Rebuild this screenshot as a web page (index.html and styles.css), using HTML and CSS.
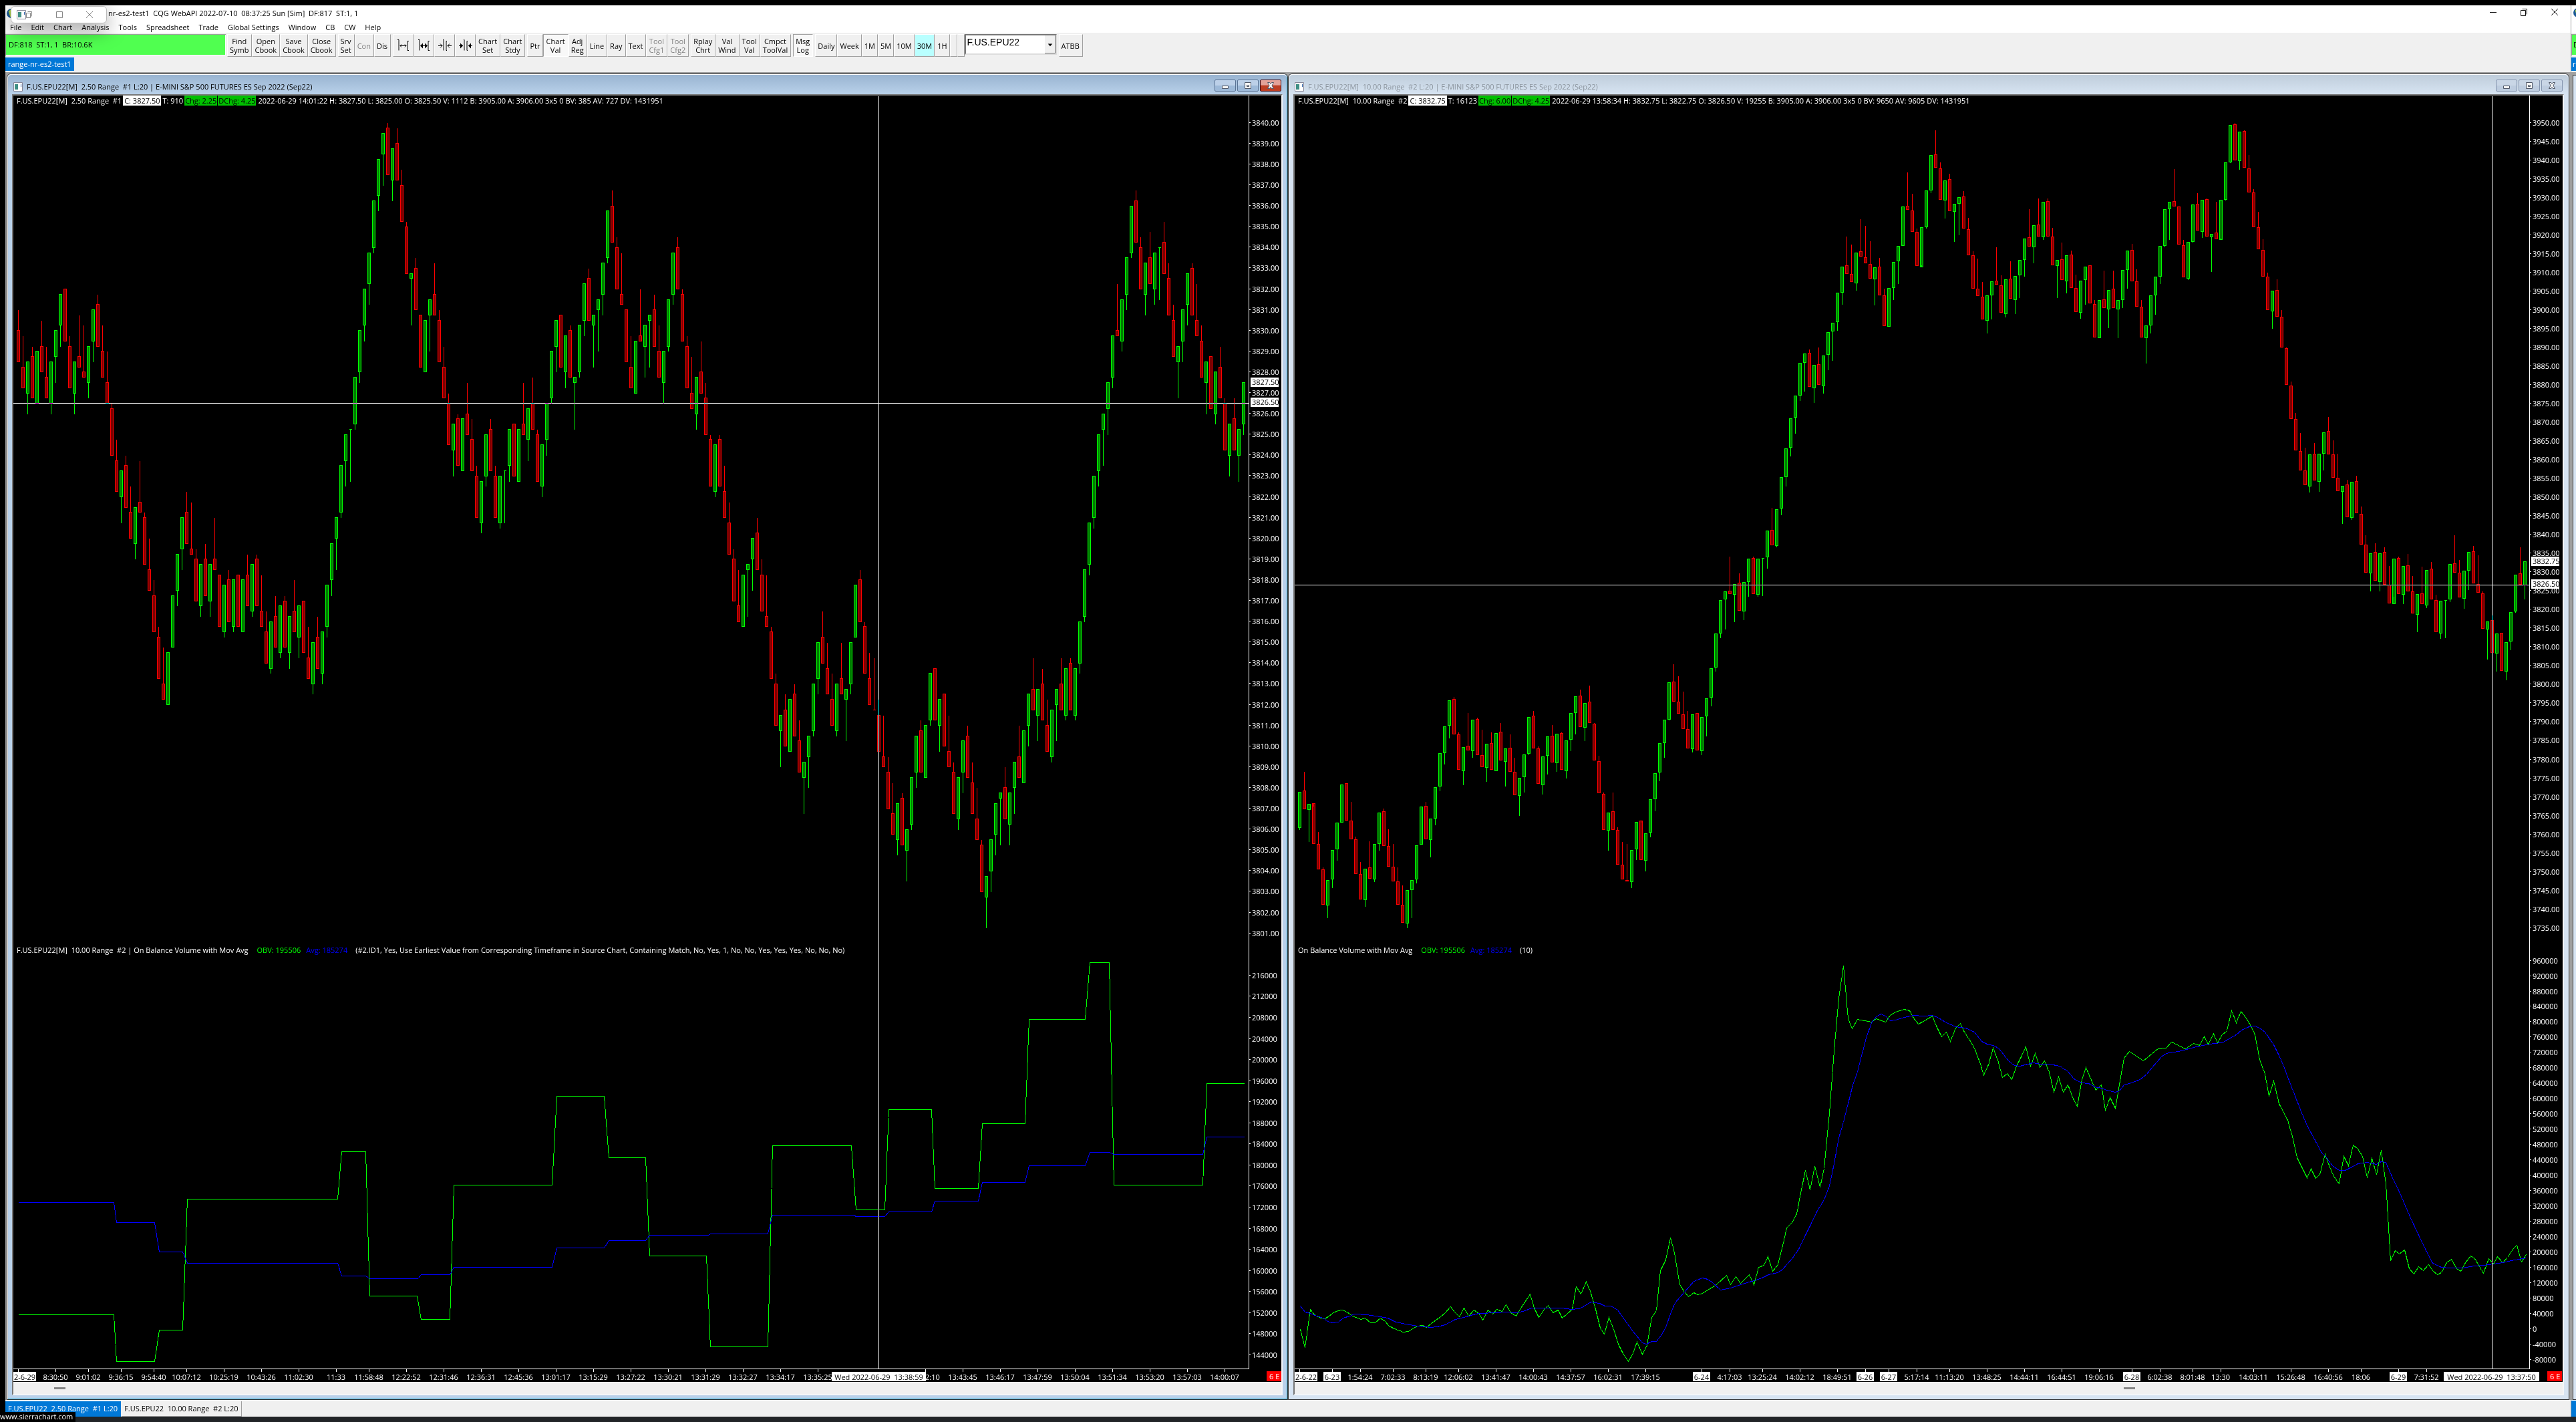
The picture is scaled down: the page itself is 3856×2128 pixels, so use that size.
FILE: index.html
```html
<!DOCTYPE html>
<html lang="en">
<head>
<meta charset="utf-8">
<title>range-nr-es2-test1</title>
<link rel="stylesheet" href="styles.css">
</head>
<body>
<div class="desktop">
  <div class="app">
    <header class="titlebar">
      <svg class="globe" viewBox="0 0 16 16" aria-hidden="true"><circle cx="8" cy="8" r="8" fill="#1c5a96"/><path d="M3 4 8 1l5 4-2 7-5 2z" fill="#a9cf48"/></svg>
      <h1 class="caption">nr-es2-test1  CQG WebAPI 2022-07-10  08:37:25 Sun [Sim]  DF:817  ST:1, 1</h1>
      <div class="sys">
        <button aria-label="Minimize"><svg viewBox="0 0 12 12"><path d="M1 6.500h10"/></svg></button>
        <button aria-label="Restore"><svg viewBox="0 0 12 12"><path d="M1.500 3.500h7v8h-7zM3.500 1.500h7v8"/></svg></button>
        <button aria-label="Close"><svg viewBox="0 0 12 12"><path d="M1 1l10 10M11 1 1 11"/></svg></button>
      </div>
    </header>
    <nav class="menu">
      <a href="#">File</a><a href="#">Edit</a><a href="#">Chart</a><a href="#">Analysis</a><a href="#">Tools</a><a href="#">Spreadsheet</a><a href="#">Trade</a><a href="#">Global Settings</a><a href="#">Window</a><a href="#">CB</a><a href="#">CW</a><a href="#">Help</a>
    </nav>
    <div class="toolbar">
      <div class="status">DF:818  ST:1, 1  BR:10.6K</div>
      <div class="group"><button>Find<br>Symb</button><button>Open<br>Cbook</button><button>Save<br>Cbook</button><button>Close<br>Cbook</button></div>
      <div class="group"><button>Srv<br>Set</button><button disabled>Con</button><button>Dis</button></div>
      <div class="group">
        <button class="icon" aria-label="Increase bar spacing"><svg viewBox="0 0 20 20"><path d="M1 1.500h2v16M18 3.500h-2v14h2M5 10.500h9M7 8.500l-2 2 2 2M12 8.500l2 2-2 2"/></svg></button>
        <button class="icon" aria-label="Increase bar spacing more"><svg viewBox="0 0 20 20"><path d="M1 1.500h2v16M18 3.500h-2v14h2M5 10.500h9"/><path class="solid" d="M4 10.500l4-4v8zM15 10.500l-4-4v8z"/></svg></button>
        <button class="icon" aria-label="Decrease bar spacing"><svg viewBox="0 0 20 20"><path d="M7 1.500h1v16M13 3.500h-1v14h1M0 10.500h6M3 7.500l3 3-3 3M20 10.500h-6M17 7.500l-3 3 3 3"/></svg></button>
        <button class="icon" aria-label="Decrease bar spacing more"><svg viewBox="0 0 20 20"><path d="M7 1.500h1v16M13 3.500h-1v14h1M0 10.500h6M20 10.500h-6"/><path class="solid" d="M6 10.500l-4-4v8zM14 10.500l4-4v8z"/></svg></button>
        <button>Chart<br>Set</button><button>Chart<br>Stdy</button>
      </div>
      <div class="group"><button>Ptr</button><button class="on">Chart<br>Val</button><button>Adj<br>Reg</button><button>Line</button><button>Ray</button><button>Text</button><button disabled>Tool<br>Cfg1</button><button disabled>Tool<br>Cfg2</button></div>
      <div class="group"><button>Rplay<br>Chrt</button><button>Val<br>Wind</button><button>Tool<br>Val</button><button>Cmpct<br>ToolVal</button></div>
      <div class="group"><button class="on">Msg<br>Log</button></div>
      <div class="group tight"><button>Daily</button><button>Week</button><button>1M</button><button>5M</button><button>10M</button><button class="period">30M</button><button>1H</button><button class="blank" aria-label="Custom period 1"></button><button class="blank" aria-label="Custom period 2"></button></div>
      <div class="symbol"><select aria-label="Symbol"><option>F.US.EPU22</option></select><svg viewBox="0 0 16 27" aria-hidden="true"><path d="M5 13h7l-3.500 4z"/></svg></div>
      <div class="group"><button>ATBB</button></div>
    </div>
    <div class="books"><button class="book">range-nr-es2-test1</button></div>

    <main class="workspace">
      <section class="win active">
        <header class="winbar">
          <svg class="winicon" viewBox="0 0 14 14" aria-hidden="true"><path d="M.5.5h13v13H.5z" fill="#fff" stroke="#889"/><path d="M2 3h5v8H2z" fill="#3f8f84"/><path d="M11 3h1v4h-1z" fill="#36a"/></svg>
          <h2>F.US.EPU22[M]  2.50 Range  #1 L:20 | E-MINI S&amp;P 500 FUTURES ES Sep 2022 (Sep22)</h2>
          <div class="winbtns">
            <button aria-label="Minimize chart 1"><svg viewBox="0 0 12 12"><path d="M1.500 6.500h9v4h-9z"/></svg></button>
            <button aria-label="Maximize chart 1"><svg viewBox="0 0 12 12"><path d="M1.500 1.500h9v9h-9zM4.500 5.500h3v2h-3z"/></svg></button>
            <button class="close" aria-label="Close chart 1"><svg viewBox="0 0 12 12"><path d="M1.500 1.500h3L6 3.500l1.500-2h3L8 6l2.500 4.500h-3L6 8.500l-1.500 2h-3L4 6z"/></svg></button>
          </div>
        </header>
        <div class="client">
          <div class="plot">
            <svg class="chart" id="chart1" viewBox="20 143 1898 1925" role="img" aria-label="F.US.EPU22 2.50 Range"></svg>
            <p class="readout"><span>F.US.EPU22[M]  2.50 Range  #1</span><span class="last">C: 3827.50</span><span>T: 910</span><span class="chg">Chg: 2.25</span><span class="chg">DChg: 4.25</span><span>2022-06-29 14:01:22 H: 3827.50 L: 3825.00 O: 3825.50 V: 1112 B: 3905.00 A: 3906.00 3x5 0 BV: 385 AV: 727 DV: 1431951</span></p>
            <p class="study"><span>F.US.EPU22[M]  10.00 Range  #2 | On Balance Volume with Mov Avg</span><span class="obv">OBV: 195506</span><span class="avg">Avg: 185274</span><span class="args">(#2.ID1, Yes, Use Earliest Value from Corresponding Timeframe in Source Chart, Containing Match, No, Yes, 1, No, No, Yes, Yes, Yes, No, No, No)</span></p>
          </div>
          <div class="scroll first"><i></i></div>
        </div>
      </section>
      <section class="win">
        <header class="winbar">
          <svg class="winicon" viewBox="0 0 14 14" aria-hidden="true"><path d="M.5.5h13v13H.5z" fill="#fff" stroke="#889"/><path d="M2 3h5v8H2z" fill="#3f8f84"/><path d="M11 3h1v4h-1z" fill="#36a"/></svg>
          <h2>F.US.EPU22[M]  10.00 Range  #2 L:20 | E-MINI S&amp;P 500 FUTURES ES Sep 2022 (Sep22)</h2>
          <div class="winbtns">
            <button aria-label="Minimize chart 2"><svg viewBox="0 0 12 12"><path d="M1.500 6.500h9v4h-9z"/></svg></button>
            <button aria-label="Maximize chart 2"><svg viewBox="0 0 12 12"><path d="M1.500 1.500h9v9h-9zM4.500 5.500h3v2h-3z"/></svg></button>
            <button aria-label="Close chart 2"><svg viewBox="0 0 12 12"><path d="M1.500 1.500h3L6 3.500l1.500-2h3L8 6l2.500 4.500h-3L6 8.500l-1.500 2h-3L4 6z"/></svg></button>
          </div>
        </header>
        <div class="client">
          <div class="plot">
            <svg class="chart" id="chart2" viewBox="1938 143 1898 1925" role="img" aria-label="F.US.EPU22 10.00 Range"></svg>
            <p class="readout"><span>F.US.EPU22[M]  10.00 Range  #2</span><span class="last">C: 3832.75</span><span>T: 16123</span><span class="chg">Chg: 6.00</span><span class="chg">DChg: 4.25</span><span>2022-06-29 13:58:34 H: 3832.75 L: 3822.75 O: 3826.50 V: 19255 B: 3905.00 A: 3906.00 3x5 0 BV: 9650 AV: 9605 DV: 1431951</span></p>
            <p class="study"><span>On Balance Volume with Mov Avg</span><span class="obv">OBV: 195506</span><span class="avg">Avg: 185274</span><span class="args">(10)</span></p>
          </div>
          <div class="scroll second"><i></i></div>
        </div>
      </section>
    </main>
    <nav class="tabs"><button class="tab current">F.US.EPU22  2.50 Range  #1 L:20</button><button class="tab">F.US.EPU22  10.00 Range  #2 L:20</button></nav>
  </div>
  <div class="app neighbour">
    <div class="titlebar"><svg class="globe" viewBox="0 0 16 16" aria-hidden="true"><circle cx="8" cy="8" r="8" fill="#1c5a96"/><path d="M3 4 8 1l5 4-2 7-5 2z" fill="#a9cf48"/></svg></div>
    <div class="menu"></div>
    <div class="toolbar"><div class="status">D</div></div>
    <div class="books"><button class="book">r</button></div>
    <div class="workspace"><div class="edge"></div></div>
    <div class="tabs"></div>
  </div>
</div>
<div class="floater">
  <svg class="winicon" viewBox="0 0 14 14" aria-hidden="true"><path d="M.5.5h13v13H.5z" fill="#fff" stroke="#889"/><path d="M2 3h5v8H2z" fill="#3f8f84"/><path d="M11 3h1v4h-1z" fill="#36a"/></svg>
  <button aria-label="Restore panel"><svg viewBox="0 0 12 12"><path d="M1.500 3.500h6v7h-6zM3.500 1.500h6v7"/></svg></button>
  <button aria-label="Maximize panel"><svg viewBox="0 0 12 12"><path d="M1.500 1.500h9v9h-9z"/></svg></button>
  <button aria-label="Close panel"><svg viewBox="0 0 12 12"><path d="M1 1l10 10M11 1 1 11"/></svg></button>
</div>
<div class="tip">www.sierrachart.com</div>
<script src="charts.js"></script>
</body>
</html>
```
FILE: styles.css
```css
* { box-sizing: border-box; }
body {
  margin: 0;
  min-height: 100vh;
  background: #212427;
  color: #000;
  font: 11px/14px "Open Sans", "Noto Sans", sans-serif;
}
h1, h2, p { margin: 0; font: inherit; }
button, select { font: inherit; color: inherit; border: 0; padding: 0; margin: 0; background: none; border-radius: 0; }
a { color: inherit; text-decoration: none; }
svg { display: block; }

.desktop { display: flex; padding-top: 8px; border-left: 8px solid #000; background: linear-gradient(#000 8px, transparent 8px); }
.app { flex: 1; min-width: 0; background: #f0f0f0; }
.neighbour { flex: 0 0 8px; overflow: hidden; border-left: 1px solid #a0a0a0; }

.titlebar { display: flex; align-items: center; height: 24px; background: #fff; }
.globe { flex: none; width: 14px; height: 14px; margin-left: 2px; }
.neighbour .globe { margin-left: 3px; margin-bottom: 2px; }
.caption { flex: 1; padding-left: 138px; white-space: pre; }
.sys { display: flex; gap: 34px; padding-right: 18px; margin-bottom: 4px; }
.sys svg { width: 12px; height: 12px; }
.sys path, .floater button path { fill: none; stroke: #111; }

.menu { display: flex; gap: 14px; height: 17px; padding: 2px 0 0 7px; background: #fff; white-space: pre; }

.toolbar { display: flex; height: 37px; padding-top: 2px; white-space: pre; }
.status { width: 330px; height: 32px; padding: 8px 4px; margin-right: 2px; background: #50ff50; border: solid #a0a0a0; border-width: 1px 0 0 1px; box-shadow: inset -1px -1px #fff; }
.neighbour .status { padding: 8px 2px; }
.group { display: flex; height: 34px; margin-right: 3px; }
.group button { padding: 0 4px 0 3px; line-height: 13px; text-align: center; border: solid; border-width: 1px; border-color: #fff #a0a0a0 #a0a0a0 #fff; }
.group.tight { margin-right: 0; }
.group.tight button { padding: 0 3px; }
.group button:disabled { color: #808080; }
.group .on { background: #f8f8f8; border-color: #a0a0a0 #fff #fff #a0a0a0; }
.group .period { background: #b9ffff; }
.group .icon { width: 31px; padding: 0 5px; }
.group.tight .blank { width: 11px; padding: 0; }
.icon svg { width: 20px; height: 20px; }
.icon path { fill: none; stroke: #000; }
.icon .solid { fill: #000; stroke: none; }
.symbol { position: relative; width: 138px; height: 31px; margin-right: 3px; border: 2px solid #777; border-right-color: #ddd; border-bottom-color: #ddd; background: #fff; }
.symbol select { appearance: none; width: 100%; height: 20px; padding-left: 2px; font: 14px "Liberation Sans", sans-serif; }
.symbol svg { position: absolute; right: 0; top: 0; width: 16px; height: 27px; background: #f0f0f0; border: solid #777; border-width: 0 1px 1px 0; pointer-events: none; }

.books { display: flex; height: 24px; padding-bottom: 3px; border-bottom: 1px solid #a0a0a0; box-shadow: inset 0 -1px #a0a0a0; }
.book { padding: 0 4px; background: #0078d7; color: #fff; white-space: pre; }
.neighbour .book { padding: 0 2px; }

.workspace { display: grid; grid-template-columns: 1fr 1fr; padding: 0 2px; background: #a0a0a0; }
.win { min-width: 0; padding: 0 7px 6px; border: 1px solid #333; border-radius: 6px 6px 0 0; background: #d7e4f2; color: #8c959e; box-shadow: inset 1px 1px #fff; }
.win.active { background: #b9d1ea; color: #000; box-shadow: inset 1px 1px #fff, inset -1px -1px #27b5e0; }
.winbar { display: flex; align-items: center; height: 30px; margin: 0 -6px; padding: 7px 8px 0 8px; background: linear-gradient(#bfcddb, #d7e4f2); border-radius: 5px 5px 0 0; border-top: 1px solid #fff; }
.active .winbar { background: linear-gradient(#99b4d1, #b9d1ea); }
.winicon { flex: none; width: 14px; height: 14px; }
.winbar h2 { flex: 1; padding-left: 6px; white-space: pre; }
.winbtns { display: flex; gap: 2px; align-self: flex-start; }
.winbtns button { display: grid; place-items: center; width: 32px; height: 18px; border: 1px solid #8494ae; border-radius: 2px; background: linear-gradient(#c9d6e6 50%, #bdccdf 50%); }
.winbtns svg { width: 12px; height: 12px; }
.winbtns path { fill: #f4f4f4; stroke: #505868; }
.active .winbtns button { border-color: #5a7394; background: linear-gradient(#bcd0e8 50%, #9db9d8 50%); }
.active .winbtns .close { border-color: #43101a; background: linear-gradient(#e3a298 45%, #bd3f24 50%); }
.client { border: 2px solid; border-color: #777 #f4f6f8 #f4f6f8 #777; }
.plot { position: relative; background: #000; color: #fff; }
.chart { width: 100%; height: auto; }
.readout { position: absolute; left: 3px; top: 0; display: flex; line-height: 15px; white-space: pre; }
.readout span { padding: 0 2px; }
.readout .last { background: #fff; color: #000; }
.readout .chg { background: #00c000; color: #000; margin-right: 1px; padding: 0 1px; }
.study { position: absolute; left: 5px; top: 66%; display: flex; gap: 8px; line-height: 15px; white-space: pre; }
.obv { padding-left: 5px; color: #0f0; }
.avg { color: #00f; }
.args { padding-left: 4px; }
.scroll { display: flex; align-items: center; height: 18px; background: #f0f0f0; }
.scroll i { width: 17px; height: 3px; background: #858585; }
.first { padding-left: 3.2%; }
.second { padding-left: 65.4%; }

.tabs { display: flex; height: 25px; padding-top: 1px; border-top: 1px solid #fff; gap: 1px; background: #f0f0f0; white-space: pre; }
.tab { padding: 0 4px; border-right: 1px solid #a0a0a0; border-bottom: 1px solid #a0a0a0; }
.tab.current { background: #0078d7; color: #fff; border-color: #0078d7; }
.neighbour .workspace { display: block; height: calc(100% - 127px); padding: 2px 0 0 2px; }
.edge { height: 100%; background: #d7e4f2; border: solid #333; border-width: 1px 0 1px 1px; }
.neighbour .tabs { background: #0078d7; }

.floater { position: absolute; left: 16px; top: 9px; display: flex; align-items: center; width: 144px; height: 26px; padding-left: 8px; background: #fff; border: 1px solid #bbb; border-radius: 6px; box-shadow: 0 10px 30px rgba(0, 0, 0, .4); }
.floater button { width: 12px; margin-right: 33px; }
.floater button:first-of-type { margin-left: -1px; }
.floater button:last-child { margin-right: 0; }
.floater button path { stroke: #888; }
.tip { position: absolute; left: 0; bottom: 0; width: 113px; height: 15px; background: #000; color: #fff; }

text { font: 11px "Open Sans", "Noto Sans", sans-serif; fill: #fff; }
.mid { text-anchor: middle; }
.dark { fill: #000; }
.box { fill: #fff; }
.alert { fill: #f00; }
.axis, .up, .down, .line, .cross { shape-rendering: crispEdges; stroke-width: 1; }
.axis { fill: none; stroke: #fff; }
.up { fill: #008000; stroke: #0f0; }
.down { fill: #800000; stroke: #f00; }
.line { fill: none; }
.line.green { stroke: #0f0; }
.line.blue { stroke: #00f; }
.cross { fill: none; stroke: #fff; mix-blend-mode: difference; }
```
FILE: charts.js
```js
// Range bars: each number is a bar's close, positive for an up bar and negative for a down bar.
// A bar opens one tick beyond the previous close and always spans the full range.
// Each run of closes is in its own plotting scale: y = top + value / scale.
const chart1 = {
  id: "chart1", x0: 27, axisX: 1869, left: 20, tick: 7.775, base: 183.7, span: 10, firstBody: 6,
  runs: [
    { top: 150, scale: 1.6505, closes: [-645,-710,644,-735,620,-671,-735,644,568,478,-594,-710,644,-658,-684,606,517,-606,-684,-748,-876,-967,914,-1005,-1083,1004,-1018,-1146,-1211,-1313,-1429,-1480,1364,1224,1120,1031,-1095,-1120,-1236,1146,-1224,1146,-1159,-1300,1197,-1287,1184,-1300,1184,-1248,1146,-1248,-1300,-1390,1287,-1351,1248,-1351,1274,-1313,1248,-1364,-1429,1339,-1403,1313,1197,1095,1031,902,825,812,684,568,466,376,247,144,80,-183,119,-195,-298,-426,427,-517,-658,542,491,-529,-645,-735,-851,800,-902,786,-825,-915,-1031,940,825,-915,-1031,928,915,812,-928,812,-825,760,-812,-940,851,748,620,542,-658,581,-684,684,555,453,-542,529,491,402,272,-351,-466,-504,-645,-710,594,-594] },
    { top: 150, scale: 1.2544, closes: [422,402,-461,-520,471,374,285,-354,-451,-539,-577,520,-549,-627,-725,646,-725,-783,-851,-939,-978,890,871,822,-881,-959,-988,-1085,-1173,1154,-1212,1124,-1193,-1261,1242,1193,1095,1018,-1056,-1115,-1173,1095,-1115,1105,1018,909,-978,-1075,-1134,-1144,-1222,-1251,-1329,-1378,1320,-1398,1369,1271,1193,-1261,1173,1075,-1163,1124,-1212,-1251,-1339,1271,1202,-1271,-1339,-1388,-1485,1456,1388,1320,1300,-1349,1300,1242,-1271,1183,1115,-1144,1105,-1163,-1222,1144,1105,-1144,1066,-1144,1066,978,881,793,705,627,587,529,442,-442,374,295,197,-266,-354,305,-344,285,275,-325,-402,-481,461,393,324,-402,-442,-520,490,-577,510,-558,-656,607,-656,617,530] }
  ],
  cross: [1315, 603],
  prices: { from: 3840, to: 3801, step: -1, y: 183.7, dy: 31.1, digits: 2 },
  volumes: { from: 216000, to: 144000, step: -4000, y: 1459.9, dy: 31.55, digits: 0 },
  marks: [["3827.50", 572], ["3826.50", 602]],
  times: [["2-6-29",27,1,10],["8:30:50",83],["9:01:02",132],["9:36:15",181],["9:54:40",230],["10:07:12",279],["10:25:19",335],["10:43:26",391],["11:02:30",447],["11:33",503],["11:58:48",552],["12:22:52",608],["12:31:46",664],["12:36:31",720],["12:45:36",776],["13:01:17",832],["13:15:29",888],["13:27:22",944],["13:30:21",1000],["13:31:29",1056],["13:32:27",1112],["13:34:17",1168],["13:35:25",1224],["13:42:10",1385],["13:43:45",1441],["13:46:17",1497],["13:47:59",1553],["13:50:04",1609],["13:51:34",1665],["13:53:20",1721],["13:57:03",1777],["14:00:07",1833]],
  cursor: ["Wed 2022-06-29  13:38:59", 1245, 1386],
  green: "22,1222 137,1222 141,1371 187,1371 192,1270 221,1270 226,848 408,848 413,695 442,695 447,1160 504,1160 509,1237 544,1237 549,804 668,804 673,516 731,516 736,714 781,714 786,1031 854,1031 859,1324 929,1324 934,677 1030,677 1035,884 1070,884 1075,559 1127,559 1131,815 1183,815 1188,606 1240,606 1245,270 1313,270 1318,87 1342,87 1347,804 1455,804 1460,477 1505,477",
  blue: "22,860 137,860 141,924 187,924 192,1018 221,1018 226,1056 408,1056 413,1097 442,1097 447,1104 505,1104 509,1093 544,1093 549,1069 668,1069 673,1005 731,1005 736,983 781,983 786,964 857,964 859,960 929,960 934,901 1032,901 1035,904 1070,904 1075,890 1127,890 1131,856 1183,856 1188,794 1240,794 1245,740 1313,740 1318,697 1342,697 1347,705 1455,705 1460,649 1505,649",
  lineX: 0
};
const chart2 = {
  id: "chart2", x0: 1945, axisX: 3786, left: 1938, tick: 1.4012, base: 183.5, span: 40, firstBody: 38,
  runs: [
    { top: 700, scale: 2.1189, closes: [1028,-1083,1066,-1191,-1273,-1386,1307,1212,1126,1004,-1118,-1178,-1288,-1367,1273,-1303,1195,1093,-1198,-1264,-1309,-1384,-1441,1339,1307,1197,1076,-1176,1115,1013,907,822,738,-843,-956,886,-894,799,-909,-949,877,-958,841,-928,892,-964,-1038,983,911,790,-888,-1002,917,852,-934,843,-958,865,778,725,-822,746,-809,-926,-1032,-1148,1093,-1148,-1257,-1305,-1309,1212,1123,-1242,1159,1051,970,873,799,682,-740,-780,-828,-888,782,-894,790,731,638,526,420,392,-400,370,-451,362,289,-400,290,287,199,-246,131,30] },
    { top: 150, scale: 2.0632, closes: [1076,984,912,811,782,-883,819,-879,788,718,689,594,514,-534,-561,472,-483,-503,-549,518,-602,-697,582,501,450,330,-338,-404,-510,394,281,169,-208,-307,248,-340,320,299,-396,-477,-582] },
    { top: 150, scale: 1.7422, closes: [-509,-570,511,473,-480,-553,468,-517,459,418,360,-381,328,-353,267,-353,-430,417,-468,405,-487,-552,471,435,-529,-618,522,-541,496,-541,522,443,394,-471,-536,-618,588,509,462,380,286,265,-275,-376,-462,370,272,-339,260,-353,348,-360,262,163,65,-157,82,-175,-238,-329,-388,-459,-546,497,-564,-644,-741,-830,-912,-964,-1003,924,-990,922,867,-923,-984,-1018,1006,-1086,996,-1076,-1158,-1231,1182,-1252,1182,-1262,-1311,1196,-1287,1215,-1280,-1337,1288,-1313,1226,-1301,-1386,1307,1304,1210,-1231,-1295,1228,1178,-1259,-1283,-1377,1360,-1440,1391,-1487,1414,1336,1238,-1262,1203] }
  ],
  cross: [3730, 875],
  prices: { from: 3950, to: 3735, step: -5, y: 183.5, dy: 28.03, digits: 2 },
  volumes: { from: 960000, to: -80000, step: -40000, y: 1437.6, dy: 22.965, digits: 0 },
  marks: [["3832.75", 840], ["3826.50", 874]],
  times: [["2-6-22",1945,1,10],["6-23",1994,1],["1:54:24",2036],["7:02:33",2085],["8:13:19",2134],["12:06:02",2183],["13:41:47",2239],["14:00:43",2295],["14:37:57",2351],["16:02:31",2407],["17:39:15",2463],["6-24",2547,1],["4:17:03",2589],["13:25:24",2638],["14:02:12",2694],["18:49:51",2750],["6-26",2792,1],["6-27",2827,1],["5:17:14",2869],["11:13:20",2918],["13:48:25",2974],["14:44:11",3030],["16:44:51",3086],["19:06:16",3142],["6-28",3191,1],["6:02:38",3233],["8:01:48",3282],["13:30",3324],["14:03:11",3373],["15:26:48",3429],["16:40:56",3485],["18:06",3534],["6-29",3590,1],["7:31:52",3632]],
  cursor: ["Wed 2022-06-29  13:37:50", 3658, 3801],
  green: "24,1269 30,1327 36,1204 41,1222 47,1229 53,1234 58,1227 64,1214 70,1209 75,1206 81,1213 87,1226 98,1236 103,1231 109,1248 115,1247 121,1232 127,1243 132,1257 138,1266 149,1278 155,1274 160,1266 166,1257 172,1255 177,1262 183,1250 194,1228 200,1215 206,1196 211,1213 217,1228 222,1200 228,1225 234,1206 240,1216 245,1238 251,1206 257,1218 262,1203 268,1210 273,1189 279,1214 285,1226 290,1205 302,1154 307,1200 313,1230 319,1203 324,1190 330,1215 336,1206 341,1233 347,1218 353,1205 358,1131 364,1154 370,1115 375,1145 381,1195 387,1264 392,1284 398,1230 404,1275 409,1315 415,1347 421,1371 426,1350 432,1310 438,1348 444,1320 449,1230 455,1208 460,1080 466,1045 472,974 477,1020 483,1125 489,1147 494,1164 500,1150 505,1156 511,1152 517,1141 528,1125 540,1094 545,1124 551,1098 557,1119 567,1092 573,1124 579,1068 585,1062 590,1034 596,1081 602,1060 608,1000 613,942 619,924 625,895 630,830 635,756 641,818 647,744 653,810 658,750 664,570 670,370 676,200 681,97 687,268 692,299 698,269 715,278 721,266 732,277 738,257 744,245 755,236 761,242 766,264 772,284 778,276 789,258 794,290 800,326 806,311 811,340 817,297 823,282 828,310 834,335 840,362 846,408 851,447 857,415 862,361 868,400 874,456 879,444 885,463 891,420 897,385 902,358 908,421 913,379 919,424 925,402 930,440 936,503 942,454 947,504 953,480 959,525 964,549 970,462 975,425 981,465 987,497 993,481 998,563 1004,522 1010,556 1015,480 1021,395 1027,373 1032,382 1044,403 1055,378 1062,365 1072,361 1078,342 1095,365 1105,346 1112,354 1118,325 1123,348 1129,317 1134,345 1140,318 1145,305 1151,241 1157,281 1162,243 1168,262 1174,290 1179,318 1185,398 1191,445 1196,516 1202,467 1208,540 1219,595 1225,655 1230,715 1236,745 1242,780 1247,752 1253,782 1258,768 1264,705 1270,745 1275,775 1281,799 1287,711 1292,741 1298,675 1304,686 1309,710 1315,779 1321,717 1326,769 1332,691 1338,800 1343,1046 1349,1014 1354,1026 1360,1013 1366,1072 1372,1089 1377,1066 1383,1079 1389,1060 1394,1078 1400,1091 1405,1085 1411,1054 1417,1043 1423,1073 1428,1082 1434,1053 1440,1031 1445,1041 1451,1066 1456,1088 1462,1041 1468,1058 1473,1033 1479,1053 1485,1036 1491,1010 1496,997 1502,1050 1507,1028",
  blue: "24,1193 30,1213 36,1216 42,1224 52,1233 59,1245 64,1247 70,1244 76,1232 84,1226 90,1219 104,1222 121,1227 130,1231 140,1244 152,1252 166,1258 182,1263 190,1261 200,1254 212,1237 222,1229 230,1224 240,1216 262,1215 273,1213 285,1214 293,1210 305,1200 320,1199 340,1200 352,1204 362,1201 376,1180 386,1185 393,1193 400,1193 408,1206 416,1237 427,1276 438,1311 443,1315 449,1308 455,1308 461,1288 466,1262 472,1220 478,1183 489,1148 500,1113 511,1102 517,1108 523,1117 533,1141 545,1134 557,1124 573,1112 583,1103 591,1093 602,1086 608,1075 619,1040 627,1010 635,965 642,930 650,885 658,850 664,805 670,735 676,650 681,600 687,540 693,480 698,440 704,380 709,330 715,280 721,260 727,251 732,258 738,274 744,272 755,263 766,257 778,259 789,257 795,262 806,279 817,292 829,297 840,310 849,340 857,351 863,353 870,365 881,402 888,417 895,419 911,409 920,414 930,414 943,420 953,437 960,460 969,474 978,475 985,486 994,490 1000,497 1010,504 1015,499 1021,480 1030,473 1040,462 1048,445 1055,424 1066,390 1072,379 1090,371 1105,360 1120,351 1129,347 1140,345 1151,327 1157,319 1163,304 1172,293 1179,291 1185,297 1191,310 1202,350 1208,385 1213,415 1219,455 1225,500 1236,570 1242,612 1252,660 1260,700 1266,715 1273,741 1281,757 1288,756 1295,748 1304,735 1315,731 1326,736 1332,728 1338,730 1344,770 1354,825 1366,900 1377,965 1386,1015 1394,1055 1405,1068 1415,1071 1430,1071 1445,1064 1456,1062 1468,1057 1479,1053 1490,1047 1507,1038",
  lineX: 1916
};

const AXIS_Y = 2049;

function bars(c) {
  let i = 0, prev = null, out = "";
  for (const run of c.runs) for (const v of run.closes) {
    const dir = v > 0 ? -1 : 1;
    const close = Math.round((run.top + Math.abs(v) / run.scale - c.base) / c.tick);
    const open = prev ? prev.close + prev.dir : close - dir * c.firstBody;
    const far = close - dir * c.span;
    const y = k => Math.floor(c.base + k * c.tick) + .5;
    const x = c.x0 + 7 * i + .5;
    out += `<path class="${dir < 0 ? "up" : "down"}" d="M${x} ${y(far)}V${y(open)}M${x - 2} ${y(open)}H${x + 2}V${y(close)}H${x - 2}Z"/>`;
    prev = { close, dir };
    i++;
  }
  return out;
}

function scale(c, s) {
  let out = "", n = Math.round((s.to - s.from) / s.step);
  for (let i = 0; i <= n; i++) {
    const y = Math.round(s.y + i * s.dy);
    out += `<path class="axis" d="M${c.axisX} ${y - .5}h3"/><text x="${c.axisX + 5}" y="${y + 4}">${(s.from + i * s.step).toFixed(s.digits)}</text>`;
  }
  return out;
}

function timeAxis(c) {
  return c.times.map(([label, x, day, shift = 0]) => {
    const w = label.length > 5 ? 34 : 26, mid = x + shift;
    return `<path class="axis" d="M${x + .5} ${AXIS_Y}v4"/>` +
      (day ? `<rect class="box" x="${mid - w / 2}" y="2053" width="${w}" height="14"/>` : "") +
      `<text class="mid${day ? " dark" : ""}" x="${mid}" y="2065">${label}</text>`;
  }).join("");
}

function line(c, name) {
  const pts = c[name].split(" ").map(p => {
    const [x, y] = p.split(",");
    return Math.round(c.lineX + x / .80825) + .5 + "," + (Math.round(1400 + y / 2.1538) + .5);
  });
  return `<polyline class="line ${name}" points="${pts.join(" ")}"/>`;
}

function draw(c) {
  const [cx, cy] = c.cross, [label, a, b] = c.cursor;
  document.getElementById(c.id).innerHTML =
    bars(c) + line(c, "green") + line(c, "blue") +
    `<path class="axis" d="M${c.axisX + .5} 143V${AXIS_Y}M${c.left} ${AXIS_Y - .5}H${c.axisX}"/>` +
    scale(c, c.prices) + scale(c, c.volumes) + timeAxis(c) +
    c.marks.map(([t, y]) => `<rect class="box" x="${c.axisX + 3}" y="${y - 7}" width="42" height="14"/><text class="dark" x="${c.axisX + 5}" y="${y + 4}">${t}</text>`).join("") +
    `<rect class="box" x="${a}" y="2053" width="${b - a}" height="14"/><text class="mid dark" xml:space="preserve" x="${(a + b) / 2}" y="2065">${label}</text>` +
    `<rect class="alert" x="${c.axisX + 27}" y="2052" width="22" height="15"/><text x="${c.axisX + 31}" y="2064">6 E</text>` +
    `<path class="cross" d="M${cx + .5} 144V${AXIS_Y - 1}M${c.left} ${cy + .5}H${c.axisX}"/>`;
}

draw(chart1);
draw(chart2);
```
